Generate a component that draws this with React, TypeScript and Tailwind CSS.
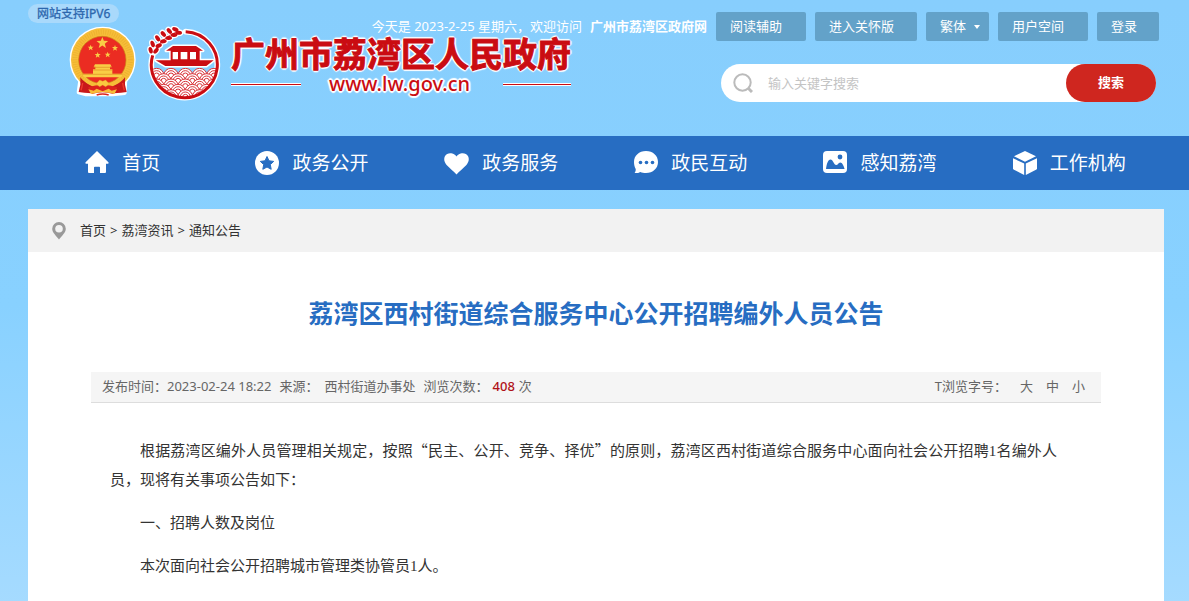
import React from 'react';

const navItems = [
  { label: '首页', icon: HomeIcon },
  { label: '政务公开', icon: StarIcon },
  { label: '政务服务', icon: HeartIcon },
  { label: '政民互动', icon: ChatIcon },
  { label: '感知荔湾', icon: PictureIcon },
  { label: '工作机构', icon: CubeIcon },
];

function HomeIcon() {
  return (
    <svg viewBox="0 0 24 24" className="h-6 w-6 fill-white" aria-hidden="true">
      <path d="M12 0 0.600 11.200q-.7 1.300.6 1.500H3v8.300q0 1 1 1H9v-5.500q0-.8.8-.8h4.400q.8 0 .8.800v5.500h5q1 0 1-1v-8.300h1.800q1.300-.2.6-1.500z" />
    </svg>
  );
}

function StarIcon() {
  return (
    <svg viewBox="0 0 24 24" className="h-6 w-6" aria-hidden="true">
      <circle cx="12" cy="12" r="12" className="fill-white" />
      <path
        d="M12 5.500l2 4.300 4.700.6-3.400 3.200.9 4.700-4.200-2.300-4.200 2.300.9-4.700-3.400-3.200 4.700-.6z"
        className="fill-[#276dc2] stroke-[#276dc2]"
        strokeLinejoin="round"
      />
    </svg>
  );
}

function HeartIcon() {
  return (
    <svg viewBox="0 0 25 24" className="h-6 w-[25px] fill-white" aria-hidden="true">
      <path d="M12.500 23.500C9.500 20 5.500 17 2.600 13.900.3 11.300-.4 8.300.8 5.600 2.300 2.400 5.700 1.700 8.300 2.500c1.900.6 3.300 1.700 4.200 3.100.9-1.400 2.300-2.500 4.200-3.100 2.600-.8 6-.1 7.500 3.100 1.200 2.700.5 5.700-1.800 8.300-2.900 3.100-6.900 6.100-9.900 9.600z" />
    </svg>
  );
}

function ChatIcon() {
  return (
    <svg viewBox="0 0 24 24" className="h-6 w-6" aria-hidden="true">
      <path
        d="M12 0C19 0 24 4.700 24 11s-5 11-12 11c-2.300 0-4-.3-5.700-1.100C4.600 21.900 2.800 22.200.6 22c.9-1.200 1.300-2.500 1.100-4C.6 16 0 13.700 0 11 0 4.700 5 0 12 0z"
        className="fill-white"
      />
      <g className="fill-[#276dc2]">
        <circle cx="6.500" cy="11.500" r="1.800" />
        <circle cx="12.500" cy="11.500" r="1.800" />
        <circle cx="18.500" cy="11.500" r="1.800" />
      </g>
    </svg>
  );
}

function PictureIcon() {
  return (
    <svg viewBox="0 0 24 24" className="h-6 w-6" aria-hidden="true">
      <rect y="0" width="24" height="22" rx="4" className="fill-white" />
      <g className="fill-[#276dc2]">
        <circle cx="17" cy="6" r="2.400" />
        <path d="M3 18C3.500 13 5 8.500 7.500 8.500S11 14 13.200 14c1.800 0 2.200-2.600 4-2.600 2.100 0 3.700 3.600 4.400 6.600z" />
      </g>
    </svg>
  );
}

function CubeIcon() {
  return (
    <svg viewBox="0 0 24 24" className="h-6 w-6 fill-white" aria-hidden="true">
      <path d="M12 0 23 5.300 12 10.800 1 5.300z" />
      <path d="M0 7.200 11.200 12.600V24L1 18.800q-1-.6-1-1.600z" />
      <path d="M24 7.200 12.800 12.600V24L23 18.800q1-.6 1-1.600z" />
    </svg>
  );
}

function NationalEmblem() {
  return (
    <svg viewBox="27 33 204 216" className="h-[72px] w-[68px]" aria-hidden="true">
      <g className="fill-white stroke-white" strokeWidth="12" strokeLinejoin="round">
        <circle cx="128" cy="134" r="93" />
        <path d="M62 188 56 232 78 238 98 238 158 238 194 234 196 188z" />
      </g>
      <circle cx="128" cy="134" r="95" fill="#f6bd38" />
      <circle cx="128" cy="134" r="83" fill="none" stroke="#dc9a1d" strokeWidth="15" strokeDasharray="2 5" opacity=".4" />
      <circle cx="127" cy="135" r="71" fill="#eb2c22" stroke="#c98414" strokeWidth="2" />
      <g fill="#f9cd45">
        <path d="M127 66l4.500 11.500 13 .7-10 8 3.300 12.500L127 91.700l-10.800 7 3.300-12.500-10-8 13-.7z" />
        <path id="small-star" d="M92 89l2.300 6 6.700.3-5.100 4 1.700 6.600L92 102.300l-5.600 3.600 1.700-6.600-5.100-4 6.700-.3z" />
        <use href="#small-star" x="73" y="1" />
        <use href="#small-star" x="21" y="22" />
        <use href="#small-star" x="51" y="21" />
        <path d="M105 148h46l4 7h-5v8h7v13h31q-2 8-5 11H73q-4-5-5-11h31v-13h7v-8h-5z" />
      </g>
      <path d="M101 157h54M99 165h58M67 178h121" stroke="#df8d22" strokeWidth="2" />
      <path d="M61 187q14 20 38 24l-4 24-22-2-17-2 5-22z" fill="#c8191a" />
      <path d="M195 187q-14 20-38 24l4 24 22-2 17-2-5-22z" fill="#c8191a" />
      <path d="M68 204q-2 14-5 22M188 204q2 14 5 22" fill="none" stroke="#ec3a2c" strokeWidth="4" />
      <path d="M70 190q27 18 57 18t59-18l-4 8q-22 22-55 22T74 198z" fill="#f6bd38" />
      <path d="M84 217q44-16 88 0l-12 20q-33-10-64 0z" fill="#dd231d" />
      <path d="M108 207l11-12 9 4 9-4 11 12-11 8-9-5-9 5z" fill="#fac83f" stroke="#e0a025" strokeWidth="1" />
      <path d="M85 223l16 4 9-6 18 8 18-8 9 6 16-4-8 14-16-4-19-2-19 2-16 4z" fill="#f6bd38" />
      <path d="M110 240q18-6 36 0" fill="none" stroke="#dd231d" strokeWidth="5" />
    </svg>
  );
}

// overlapping rows of concentric arcs, drawn from the top row down
const waveRows = [
  { y: 167, xs: [50, 93, 136, 179, 222] },
  { y: 183, xs: [71, 114, 157, 200] },
  { y: 199, xs: [50, 93, 136, 179, 222] },
  { y: 215, xs: [71, 114, 157, 200] },
  { y: 231, xs: [50, 93, 136, 179, 222] },
];

// centre x, centre y and turn of each grain of the ear
const grains = [
  [32, 91, 75], [38, 72, 70], [53, 55, 55], [70, 42, 50], [88, 33, 50], [106, 28, 25],
  [48, 92, -50], [56, 77, -25], [70, 64, -10], [86, 54, -5], [102, 45, -5], [116, 38, 0],
];

function DistrictEmblem() {
  return (
    <svg viewBox="21 18 222 225" className="h-[75px] w-[74px]" aria-hidden="true">
      <defs>
        <clipPath id="disc">
          <circle cx="136" cy="133" r="98" />
        </clipPath>
      </defs>
      <path d="M137 35A99 99 0 1 1 38 106" fill="none" stroke="white" strokeWidth="17" strokeLinecap="round" />
      <g clipPath="url(#disc)">
        <path d="M30 167h212v76H30z" fill="white" />
        {waveRows.map((row) =>
          row.xs.map((x) => (
            <g key={`${row.y}-${x}`} fill="white" stroke="#d8343a" strokeWidth="3">
              <circle cx={x} cy={row.y} r="22" />
              <circle cx={x} cy={row.y} r="15" />
              <circle cx={x} cy={row.y} r="8" />
            </g>
          ))
        )}
      </g>
      <path d="M137 35A99 99 0 1 1 38 106" fill="none" stroke="#ca0c12" strokeWidth="9" />
      <g stroke="white" strokeWidth="9" fill="white" strokeLinejoin="round">
        <path d="M78 92 99 78h69l21 14h-10v29h42l-22 17H76l-29-17h45V92z" />
      </g>
      <path
        d="M78 92 99 78h69l21 14h-10v29h42l-22 17H76l-29-17h45V92zM98 96v22h16V96zM122 96v22h20V96zM150 96v22h18V96z"
        fill="#ca0c12"
        fillRule="evenodd"
      />
      {['white', '#ca0c12'].map((color) => (
        <g key={color} fill={color} stroke={color} strokeWidth={color === 'white' ? 8 : 0}>
          {grains.map(([x, y, angle]) => (
            <ellipse key={`${x}-${y}`} cx={x} cy={y} rx="10" ry="6" transform={`rotate(${angle} ${x} ${y})`} />
          ))}
          <path d="M42 98Q58 58 112 34" fill="none" stroke={color} strokeWidth={color === 'white' ? 8 : 2} />
        </g>
      ))}
    </svg>
  );
}

function Logo() {
  return (
    <a href="#" className="flex items-start" aria-label="广州市荔湾区人民政府">
      <NationalEmblem />
      <span className="ml-2.5">
        <DistrictEmblem />
      </span>
      <span className="ml-2.5 flex flex-col pt-2 text-[#ca0c12] [text-shadow:2px_0_1px_#fff,-2px_0_1px_#fff,0_2px_1px_#fff,0_-2px_1px_#fff,1px_1px_1px_#fff,-1px_-1px_1px_#fff,1px_-1px_1px_#fff,-1px_1px_1px_#fff]">
        <span className="whitespace-nowrap text-[34px] font-bold leading-10 [-webkit-text-stroke:1px_#ca0c12]">
          广州市荔湾区人民政府
        </span>
        <span className="flex items-center text-xl leading-5">
          <span className="h-[3px] w-[70px] border-y border-white bg-[#ca0c12]" />
          <span className="ml-7 font-medium">www.lw.gov.cn</span>
          <span className="ml-auto h-[3px] w-[68px] border-y border-white bg-[#ca0c12]" />
        </span>
      </span>
    </a>
  );
}

function Header() {
  const toolClass = 'h-[29px] rounded-xs bg-[#63a2c9] pl-3.5 text-left';

  return (
    <header className="h-[136px] pl-7 pr-[30px] text-[13px] text-white">
      <div className="flex items-start justify-between">
        <span className="mt-1 h-[19px] rounded-full bg-[#a9d9fb] px-[9px] text-xs leading-[19px] text-[#2c66ad] [-webkit-text-stroke:0.3px_#2c66ad]">
          网站支持IPV6
        </span>
        <div className="flex items-center gap-[9px] whitespace-nowrap pt-3">
          <span className="flex gap-2">
            今天是 2023-2-25 星期六，欢迎访问
            <b>广州市荔湾区政府网</b>
          </span>
          <button className={`${toolClass} w-[90px]`}>阅读辅助</button>
          <button className={`${toolClass} w-[102px]`}>进入关怀版</button>
          <span className="relative">
            <select aria-label="语言" className={`${toolClass} block w-[63px] appearance-none`}>
              <option>繁体</option>
              <option>简体</option>
            </select>
            <svg viewBox="0 0 6 4" className="pointer-events-none absolute right-[9px] top-[13px] h-1 w-1.5 fill-white">
              <path d="M0 0h6L3 4z" />
            </svg>
          </span>
          <button className={`${toolClass} w-[90px]`}>用户空间</button>
          <button className={`${toolClass} w-[62px]`}>登录</button>
        </div>
      </div>
      <div className="-mt-[15px] flex items-start justify-between pl-[41px] pr-[3px]">
        <Logo />
        <form className="mt-[38px] flex h-[38px] w-[435px] items-center rounded-full bg-white" onSubmit={(e) => e.preventDefault()}>
          <label htmlFor="keyword" className="ml-3 mr-[15px]" aria-label="搜索">
            <svg viewBox="0 0 20 20" className="h-5 w-5 fill-none stroke-[#bbb] stroke-2" aria-hidden="true">
              <circle cx="9.500" cy="9.500" r="8.200" />
              <path d="M15 15l4 4" strokeWidth="3" />
            </svg>
          </label>
          <input
            id="keyword"
            type="text"
            placeholder="输入关键字搜索"
            className="h-full min-w-0 flex-1 text-[#333] outline-none placeholder:text-[#c4c4c4]"
          />
          <button className="h-full w-[90px] rounded-full bg-[#cf261f] font-bold">搜索</button>
        </form>
      </div>
    </header>
  );
}

export default function App() {
  return (
    <div className="flex min-h-screen flex-col bg-linear-to-b from-[#87cefd] via-[#88d1ff] to-[#a6dbff] font-['Noto_Sans','Noto_Sans_CJK_SC',sans-serif]" lang="zh-CN">
      <Header />
      <nav className="bg-[#276dc2] pl-7 pr-[25px]">
        <ul className="grid grid-cols-6">
          {navItems.map(({ label, icon: Icon }) => (
            <li key={label}>
              <a href="#" className="flex h-[54px] items-center justify-center gap-[13px] text-[19px] text-white">
                <Icon />
                {label}
              </a>
            </li>
          ))}
        </ul>
      </nav>
      <main className="ml-7 mr-[25px] mt-[19px] flex-1 bg-white">
        <div className="flex h-[43px] items-center bg-[#f2f2f2] pl-6 text-[13px] text-[#333]">
          <svg viewBox="0 0 14 18" className="mr-3.5 h-[18px] w-3.5" aria-hidden="true">
            <path d="M7 0a6.800 6.800 0 0 1 6.800 6.800C13.800 11 9.500 14 7 17.500 4.500 14 .2 11 .2 6.800A6.800 6.800 0 0 1 7 0z" fill="#999" />
            <circle cx="7" cy="6.800" r="3.800" fill="#f2f2f2" />
          </svg>
          <div className="flex gap-1">
            <a href="#">首页</a>
            <span>&gt;</span>
            <a href="#">荔湾资讯</a>
            <span>&gt;</span>
            <a href="#">通知公告</a>
          </div>
        </div>
        <article className="px-[63px]">
          <h1 className="pb-10 pt-[42px] text-center text-[25px] font-bold leading-[38px] text-[#276dc2]">
            荔湾区西村街道综合服务中心公开招聘编外人员公告
          </h1>
          <div className="flex h-[31px] items-center justify-between border-b border-[#ddd] bg-[#f5f5f5] pl-[11px] pr-4 text-[13px] text-[#666]">
            <p className="flex gap-2">
              <span>发布时间：2023-02-24 18:22</span>
              <span className="flex gap-1.5">
                <span>来源：</span>
                <span>西村街道办事处</span>
              </span>
              <span className="flex gap-1">
                <span>浏览次数：</span>
                <span className="font-medium text-[#b01117]">408</span>
                <span>次</span>
              </span>
            </p>
            <p className="flex gap-[13px]">
              <span>T浏览字号：</span>
              <button>大</button>
              <button>中</button>
              <button>小</button>
            </p>
          </div>
          <div className="flex flex-col gap-3.5 pb-8 pl-[19px] pr-11 pt-8 font-['Noto_Sans_CJK_SC',sans-serif] text-[15px] leading-[29px] text-[#333]">
            <p className="text-justify indent-[2em]">
              根据荔湾区编外人员管理相关规定，按照“民主、公开、竞争、择优”的原则，荔湾区西村街道综合服务中心面向社会公开招聘
              <span className="font-['Liberation_Serif',serif] leading-none">1</span>名编外人员，现将有关事项公告如下：
            </p>
            <p className="indent-[2em]">一、招聘人数及岗位</p>
            <p className="indent-[2em]">
              本次面向社会公开招聘城市管理类协管员
              <span className="font-['Liberation_Serif',serif] leading-none">1</span>人。
            </p>
          </div>
        </article>
      </main>
    </div>
  );
}
